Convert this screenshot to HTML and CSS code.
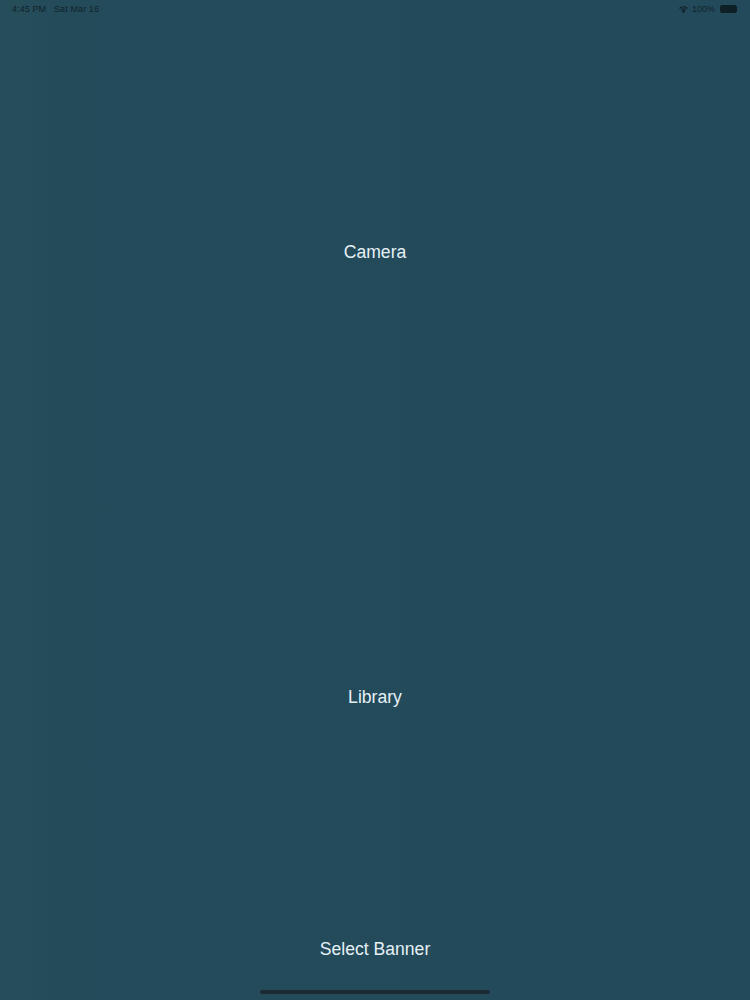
FILE: index.html
```html
<!DOCTYPE html>
<html>
<head>
<meta charset="utf-8">
<link rel="stylesheet" href="styles.css">
</head>
<body>
<div class="screen">
  <div class="status">
    <div class="status-left">4:45 PM&nbsp;&nbsp;&nbsp;Sat Mar 16</div>
    <div class="status-right">
      <svg class="wifi" width="11" height="8" viewBox="0 0 11 8"><path d="M5.5 8 L3.6 5.9 A2.8 2.8 0 0 1 7.4 5.9 Z M2.4 4.6 A4.6 4.6 0 0 1 8.6 4.6 L7.9 5.3 A3.6 3.6 0 0 0 3.1 5.3 Z M0.9 3.1 A6.7 6.7 0 0 1 10.1 3.1 L9.4 3.8 A5.7 5.7 0 0 0 1.6 3.8 Z" fill="#0f1f26"/></svg>
      <span class="pct">100%</span>
      <span class="battery"><span class="battery-fill"></span></span>
    </div>
  </div>
  <div class="row row-camera"><span class="btn">Camera</span></div>
  <div class="row row-library"><span class="btn">Library</span></div>
  <div class="row row-select"><span class="btn">Select Banner</span></div>
  <div class="home-row"><div class="home"></div></div>
</div>
</body>
</html>
```
FILE: styles.css
```css
html, body {
  margin: 0;
  padding: 0;
}
body {
  width: 750px;
  height: 1000px;
  background: #244b5a;
  font-family: "Liberation Sans", Arial, sans-serif;
  overflow: hidden;
}
.screen {
  display: flex;
  flex-direction: column;
  height: 1000px;
  background: linear-gradient(90deg, #264e5a 0%, #244b5a 8%, #234a5a 100%);
}
.status {
  height: 18px;
  flex-shrink: 0;
  display: flex;
  justify-content: space-between;
  align-items: center;
  padding: 0 13px 0 12px;
  color: #10232b;
  font-size: 9px;
}
.status-left {
  letter-spacing: 0.1px;
}
.status-right {
  display: flex;
  align-items: center;
  gap: 3px;
}
.pct {
  font-size: 9px;
}
.battery {
  width: 15px;
  height: 6px;
  border: 1px solid #0f1f26;
  border-radius: 2px;
  display: flex;
  margin-left: 2px;
}
.battery-fill {
  flex: 1;
  background: #0f1f26;
}
.row {
  flex-shrink: 0;
  display: flex;
  align-items: center;
  justify-content: center;
}
.row-camera {
  height: 468px;
}
.row-library {
  height: 422px;
}
.row-select {
  height: 82px;
}
.btn {
  color: #e6f1f6;
  font-size: 17.6px;
}
.home-row {
  position: absolute;
  left: 0;
  top: 990px;
  width: 750px;
  display: flex;
  justify-content: center;
}
.home {
  width: 230px;
  height: 4px;
  border-radius: 2px;
  background: #1c2a33;
}
```
